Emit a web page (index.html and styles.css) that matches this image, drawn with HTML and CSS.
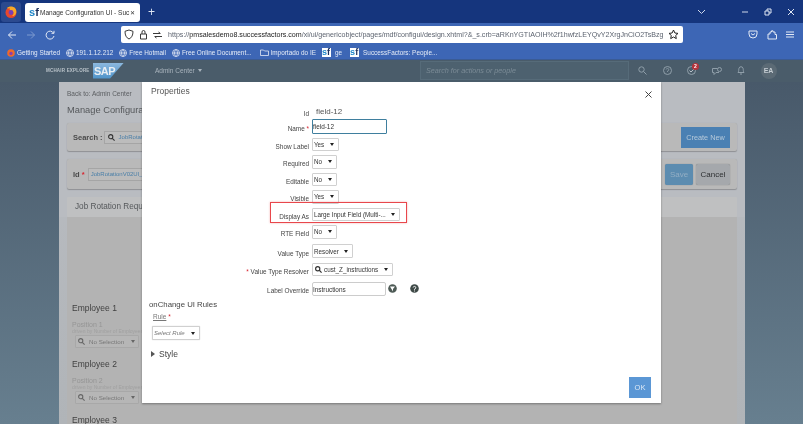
FILE: index.html
```html
<!DOCTYPE html>
<html lang="en">
<head>
<meta charset="utf-8">
<title>Manage Configuration UI</title>
<link rel="stylesheet" href="styles.css">
</head>
<body>
<div class="window">
  <header class="tabs">
    <div class="ff-btn"><svg width="14" height="14" viewBox="0 0 14 14"><circle cx="7" cy="7.500" r="5.500" fill="#e8472c"/><path d="M3 3c2-2 6-2 8 0 1.500 1.500 2 5 0 7-1 1-2 1-3 1 2-1 2-4 0-5-2-.5-3-1-2-3-1 .5-2 1-3 0z" fill="#f9a825"/><circle cx="7" cy="7.500" r="2.400" fill="#7a3fb5"/></svg></div>
    <div class="tab">
      <span class="sf"><i>s</i><b>f</b></span>
      <span class="tab-title">Manage Configuration UI - Suc</span>
      <span class="tab-x">✕</span>
    </div>
    <span class="tab-plus">+</span>
    <div class="win-ctl">
      <svg width="9" height="6" viewBox="0 0 9 6"><path d="M1 1l3.500 3.500L8 1" fill="none" stroke="#cfd8ea" stroke-width="1"/></svg>
      <span class="ctl-gap"></span>
      <svg width="7" height="2" viewBox="0 0 7 2"><path d="M0 1h6" stroke="#cfd8ea"/></svg>
      <svg width="8" height="8" viewBox="0 0 8 8"><path d="M1 3h4v4H1zM3 3V1h4v4H5" fill="none" stroke="#dfe6f3"/></svg>
      <svg width="8" height="8" viewBox="0 0 8 8"><path d="M1 1l6 6M7 1L1 7" stroke="#dfe6f3"/></svg>
    </div>
  </header>

  <nav class="toolbar">
    <svg class="nav-ic" width="10" height="10" viewBox="0 0 10 10"><path d="M9 5H1.500M5 1.500L1.500 5 5 8.500" fill="none" stroke="#e3e9f5"/></svg>
    <svg class="nav-ic" width="10" height="10" viewBox="0 0 10 10"><path d="M1 5h7.500M5 1.500L8.500 5 5 8.500" fill="none" stroke="#7f9bd0"/></svg>
    <svg class="nav-ic nav-last" width="10" height="10" viewBox="0 0 10 10"><path d="M8.500 3A4 4 0 1 0 9 6M9 .8V3.300H6.500" fill="none" stroke="#e3e9f5"/></svg>
    <div class="urlbar">
      <svg width="10" height="11" viewBox="0 0 10 11"><path d="M5 1l4 1.300c0 4-1.300 6.500-4 7.700C2.300 8.800 1 6.300 1 2.300z" fill="none" stroke="#3a3a3a"/></svg>
      <svg width="9" height="11" viewBox="0 0 9 11"><path d="M1.500 5h6v5h-6zM3 5V3a1.500 1.500 0 0 1 3 0v2" fill="none" stroke="#3a3a3a"/></svg>
      <svg width="9" height="8" viewBox="0 0 9 8"><path d="M0 2.500h7M5.500 1L7.500 2.500M9 5.500H2M3.500 7L1.500 5.500" fill="none" stroke="#3a3a3a"/></svg>
      <span class="url"><span class="url-dim">https://</span><span class="url-host">pmsalesdemo8.successfactors.com</span><span class="url-dim">/xi/ui/genericobject/pages/mdf/configui/design.xhtml?&amp;_s.crb=aRKnYGTIAOIH%2f1hwfzLEYQvY2XrgJnCiO2TsBzgc</span></span>
      <svg class="star" width="11" height="11" viewBox="0 0 11 11"><path d="M5.500 1l1.400 3 3.100.4-2.300 2.100.6 3.100-2.800-1.600-2.800 1.600.6-3.100L1 4.400 4.100 4z" fill="none" stroke="#222"/></svg>
    </div>
    <div class="tool-right">
      <svg width="10" height="9" viewBox="0 0 10 9"><path d="M1 1h8v3a4 4 0 0 1-8 0zM3 3.500l2 1.500 2-1.500" fill="none" stroke="#e3e9f5"/></svg>
      <svg width="10" height="10" viewBox="0 0 10 10"><path d="M1 4h2V2h1.500V.8h1.500V2H8v2.500H9.500V9H1z" fill="none" stroke="#e3e9f5"/></svg>
      <svg width="8" height="7" viewBox="0 0 8 7"><path d="M0 1h8M0 3.500h8M0 6h8" stroke="#e3e9f5"/></svg>
    </div>
  </nav>

  <div class="bookmarks">
    <span class="bm"><svg width="8" height="8" viewBox="0 0 8 8"><circle cx="4" cy="4" r="3.800" fill="#ef6a2a"/><circle cx="4" cy="4.500" r="1.700" fill="#8a3fb0"/></svg>Getting Started</span>
    <span class="bm"><svg class="globe" width="8" height="8" viewBox="0 0 8 8"><path d="M4 .5a3.500 3.500 0 1 0 0 7 3.500 3.500 0 0 0 0-7zM.5 4h7M4 .5c-2 2-2 5 0 7 2-2 2-5 0-7z" fill="none" stroke="#e3e9f5" stroke-width=".8"/></svg>191.1.12.212</span>
    <span class="bm"><svg class="globe" width="8" height="8" viewBox="0 0 8 8"><path d="M4 .5a3.500 3.500 0 1 0 0 7 3.500 3.500 0 0 0 0-7zM.5 4h7M4 .5c-2 2-2 5 0 7 2-2 2-5 0-7z" fill="none" stroke="#e3e9f5" stroke-width=".8"/></svg>Free Hotmail</span>
    <span class="bm bm-wide"><svg class="globe" width="8" height="8" viewBox="0 0 8 8"><path d="M4 .5a3.500 3.500 0 1 0 0 7 3.500 3.500 0 0 0 0-7zM.5 4h7M4 .5c-2 2-2 5 0 7 2-2 2-5 0-7z" fill="none" stroke="#e3e9f5" stroke-width=".8"/></svg>Free Online Document...</span>
    <span class="bm"><svg width="9" height="7" viewBox="0 0 9 7"><path d="M.5 1h3l1 1h4v4.500h-8z" fill="none" stroke="#e3e9f5" stroke-width=".8"/></svg>Importado do IE</span>
    <span class="bm bm-wide"><span class="sf sf-small"><i>s</i><b>f</b></span>ge</span>
    <span class="bm"><span class="sf sf-small"><i>s</i><b>f</b></span>SuccessFactors: People...</span>
  </div>

  <div class="apphead">
    <span class="brand">MCHAIR EXPLORE</span>
    <span class="sap">SAP</span>
    <span class="admin">Admin Center <i class="caret caret-light"></i></span>
    <div class="search">Search for actions or people</div>
    <div class="head-icons">
      <svg width="9" height="9" viewBox="0 0 9 9"><circle cx="3.500" cy="3.500" r="2.700" fill="none" stroke="#8f9ea9"/><path d="M5.500 5.500L8.500 8.500" stroke="#8f9ea9"/></svg>
      <svg width="9" height="9" viewBox="0 0 9 9"><circle cx="4.500" cy="4.500" r="4" fill="none" stroke="#8f9ea9"/><path d="M3.200 3.500a1.300 1.300 0 1 1 1.300 1.500v1" fill="none" stroke="#8f9ea9" stroke-width=".8"/></svg>
      <span class="todo"><svg width="9" height="9" viewBox="0 0 9 9"><circle cx="4.500" cy="4.500" r="4" fill="none" stroke="#8f9ea9"/><path d="M2.500 4.500l1.500 1.500 3-3" fill="none" stroke="#b7c1c9"/></svg><b class="badge">2</b></span>
      <svg width="10" height="8" viewBox="0 0 10 8"><path d="M.5 1.500h5M.5 1.500v4h1.500v2l2-2h3" fill="none" stroke="#8f9ea9"/><circle cx="7.500" cy="2.500" r="2" fill="none" stroke="#8f9ea9"/></svg>
      <svg width="8" height="9" viewBox="0 0 8 9"><path d="M1 6.500c1-1 .5-3 1-4.300a2.100 2.100 0 0 1 4 0c.5 1.300 0 3.300 1 4.300zM3 8h2" fill="none" stroke="#8f9ea9"/></svg>
      <span class="avatar">EA</span>
    </div>
  </div>

  <main class="main">
    <section class="panel">
      <div class="panel-top">
        <div class="back">Back to: Admin Center</div>
        <h1 class="page-title">Manage Configuration UI</h1>
        <div class="card card-search">
          <b class="card-label">Search :</b>
          <span class="lookup"><svg width="7" height="7" viewBox="0 0 9 9"><circle cx="3.500" cy="3.500" r="2.700" fill="none" stroke="#333" stroke-width="1.400"/><path d="M5.500 5.500L8.500 8.500" stroke="#333" stroke-width="1.400"/></svg>JobRotationV02UI</span>
          <button class="btn btn-create">Create New</button>
        </div>
        <div class="card card-id">
          <b class="card-label">Id <em>*</em></b>
          <span class="lookup lookup-id">JobRotationV02UI_</span>
          <span class="card-actions">
            <button class="btn btn-save">Save</button>
            <button class="btn btn-cancel">Cancel</button>
          </span>
        </div>
        <div class="section-bar">Job Rotation Request</div>
      </div>
      <div class="panel-body">
        <div class="employee">
          <h2>Employee 1</h2>
          <div class="pos">Position 1</div>
          <div class="hint">driven by Number of Employees</div>
          <div class="nosel"><svg width="7" height="7" viewBox="0 0 9 9"><circle cx="3.500" cy="3.500" r="2.700" fill="none" stroke="#666" stroke-width="1.400"/><path d="M5.500 5.500L8.500 8.500" stroke="#666" stroke-width="1.400"/></svg><span>No Selection</span><i class="caret caret-grey"></i></div>
        </div>
        <div class="employee">
          <h2>Employee 2</h2>
          <div class="pos">Position 2</div>
          <div class="hint">driven by Number of Employees</div>
          <div class="nosel"><svg width="7" height="7" viewBox="0 0 9 9"><circle cx="3.500" cy="3.500" r="2.700" fill="none" stroke="#666" stroke-width="1.400"/><path d="M5.500 5.500L8.500 8.500" stroke="#666" stroke-width="1.400"/></svg><span>No Selection</span><i class="caret caret-grey"></i></div>
        </div>
        <div class="employee"><h2>Employee 3</h2></div>
      </div>
    </section>

    <div class="modal">
      <h3 class="modal-title">Properties</h3>
      <button class="modal-x" aria-label="Close"><svg width="7" height="7" viewBox="0 0 7 7"><path d="M.5.5l6 6M6.500.5l-6 6" stroke="#444" stroke-width="1"/></svg></button>
      <div class="form">
        <label>Id</label><div class="val-id">field-12</div>
        <label>Name <em>*</em></label><div><span class="input input-name">field-12</span></div>
        <label>Show Label</label><div><span class="sel w27">Yes<i class="caret"></i></span></div>
        <label>Required</label><div><span class="sel w25">No<i class="caret"></i></span></div>
        <label>Editable</label><div><span class="sel w25">No<i class="caret"></i></span></div>
        <label>Visible</label><div><span class="sel w27">Yes<i class="caret"></i></span></div>
        <label>Display As</label><div><span class="sel w88">Large Input Field (Multi-...<i class="caret"></i></span></div>
        <label>RTE Field</label><div><span class="sel w25">No<i class="caret"></i></span></div>
        <label>Value Type</label><div><span class="sel w41">Resolver<i class="caret"></i></span></div>
        <label><em>*</em> Value Type Resolver</label><div><span class="sel w81"><svg width="7" height="7" viewBox="0 0 9 9"><circle cx="3.500" cy="3.500" r="2.700" fill="none" stroke="#333" stroke-width="1.500"/><path d="M5.500 5.500L8.500 8.500" stroke="#333" stroke-width="1.500"/></svg><span class="sel-text">cust_Z_instructions</span><i class="caret"></i></span></div>
        <label class="label-end">Label Override</label>
        <div class="override">
          <span class="input input-label">Instructions</span>
          <svg class="globe-ic" width="9" height="9" viewBox="0 0 9 9"><circle cx="4.500" cy="4.500" r="4.300" fill="#4d5a55"/><path d="M2 2.500h5L5 5v2.500L3.500 5z" fill="#fff"/></svg>
          <svg class="help-ic" width="9" height="9" viewBox="0 0 9 9"><circle cx="4.500" cy="4.500" r="4.300" fill="#3f4a48"/><path d="M3.200 3.500a1.300 1.300 0 1 1 1.300 1.500v.8M4.500 6.500v1" fill="none" stroke="#fff" stroke-width=".9"/></svg>
        </div>
      </div>
      <div class="rules">
        <h4>onChange UI Rules</h4>
        <div class="rule-label"><u>Rule</u> <em>*</em></div>
        <span class="sel sel-rule">Select Rule<i class="caret"></i></span>
        <div class="style-row"><i class="tri"></i>Style</div>
      </div>
      <button class="btn btn-ok">OK</button>
      <div class="highlight"></div>
    </div>
  </main>
</div>
</body>
</html>
```

FILE: styles.css
```css
* { box-sizing: border-box; }
html, body { margin: 0; height: 100%; overflow: hidden; }
body { font-family: "Liberation Sans", Arial, sans-serif; color: #333; background: #4a5f6f; }
em { color: #d9232e; font-style: normal; }
button { font-family: inherit; border: 0; padding: 0; margin: 0; }
h1, h2, h3, h4 { margin: 0; font-weight: 400; }

.window { width: 803px; height: 424px; display: flex; flex-direction: column; filter: blur(.35px); overflow: hidden; }

/* browser tabs */
.tabs { flex: 0 0 23px; background: #15357d; display: flex; align-items: center; }
.ff-btn { width: 20px; height: 20px; margin: 1px 0 0 1px; background: #2c4a8f; border-radius: 3px; display: flex; align-items: center; justify-content: center; }
.tab { width: 115px; height: 19px; margin: 2px 0 0 4px; background: #fff; border-radius: 3px; display: flex; align-items: center; padding-left: 4px; }
.tab-title { font-size: 6.500px; color: #333; white-space: nowrap; }
.tab-x { font-size: 6px; margin-left: auto; margin-right: 5px; color: #333; }
.tab-plus { color: #dfe6f3; font-size: 12px; margin-left: 8px; line-height: 1; }
.win-ctl { margin-left: auto; margin-right: 8px; display: flex; align-items: center; gap: 15px; }
.ctl-gap { width: 21px; margin-left: -15px; }

.sf { display: inline-flex; flex: none; align-items: flex-end; font-weight: 700; font-size: 11px; line-height: 1; width: 11px; overflow: hidden; }
.sf i { font-style: normal; color: #1f86c9; }
.sf b { color: #1c2f5c; }
.sf-small { font-size: 9px; width: 9px; background: #fff; margin-right: 2px; }

/* address bar */
.toolbar { flex: 0 0 23px; background: #3d66b5; display: flex; align-items: center; padding-left: 7px; }
.nav-ic { margin-right: 9px; flex: none; }
.nav-last { margin-right: 66px; }
.urlbar { width: 562px; min-width: 0; flex: none; height: 17px; background: #fff; border-radius: 2px; display: flex; align-items: center; padding: 0 4px 0 3px; gap: 5px; font-size: 7.100px; }
.urlbar svg { flex: none; }
.url { flex: 1; min-width: 0; overflow: hidden; white-space: nowrap; margin-left: 1px; }
.url-host { color: #222; }
.url-dim { color: #5d6470; }
.tool-right { margin-left: auto; margin-right: 9px; display: flex; align-items: center; gap: 9px; }

/* bookmarks */
.bookmarks { flex: 0 0 13px; background: #3d66b5; display: flex; align-items: center; padding-left: 7px; gap: 6px; color: #e4ebf7; font-size: 6.400px; white-space: nowrap; }
.bm { display: inline-flex; align-items: center; gap: 2px; }
.bm-wide { margin-right: 2px; }

/* app header */
.apphead { flex: 0 0 23px; background: #4a5c6a; display: flex; align-items: center; box-shadow: inset 0 1px 0 #3a5b95; }
.brand { font-size: 4.500px; font-weight: 700; color: #b9c2c9; margin-left: 46px; width: 47px; letter-spacing: .2px; white-space: nowrap; }
.sap { width: 31px; height: 16px; background: linear-gradient(#8cb8de, #4e93c9); clip-path: polygon(0 0, 100% 0, 55% 100%, 0 100%); color: #e8eef3; font-weight: 700; font-size: 11px; line-height: 16px; padding-left: 1px; letter-spacing: -.5px; }
.admin { color: #a9b4bd; font-size: 6.500px; margin-left: 31px; width: 265px; display: flex; align-items: center; gap: 3px; white-space: nowrap; }
.search { width: 209px; height: 19px; border: 1px solid #566b79; background: #4d616f; color: #7b8b96; font-size: 7.200px; font-style: italic; display: flex; align-items: center; padding-left: 5px; }
.head-icons { display: flex; align-items: center; margin-left: 9px; gap: 15.500px; }
.todo { position: relative; display: inline-flex; }
.badge { position: absolute; top: -3px; left: 5px; width: 7px; height: 7px; border-radius: 50%; background: #b5323a; color: #fff; font-size: 5px; line-height: 7px; text-align: center; }
.avatar { width: 16px; height: 16px; border-radius: 50%; background: #5b6a75; color: #c4ccd2; font-size: 7px; font-weight: 700; display: flex; align-items: center; justify-content: center; }

/* page */
.main { flex: 1; position: relative; background: linear-gradient(#48596a, #677f8f); padding-left: 59px; overflow: hidden; }
.panel { width: 686px; height: 100%; background: linear-gradient(#babdc2, #b0b4b8); display: flex; flex-direction: column; }
.panel-top { background: #b9bcc1; padding: 8px 8px 0; }
.back { font-size: 6.500px; color: #5a5d60; line-height: 8px; }
.page-title { font-size: 9.300px; color: #55585b; line-height: 11px; margin-top: 7px; }
.card { background: #b9b9b9; box-shadow: 0 1px 1px #8f9194, 0 0 1px #a4a6a8; border-radius: 2px; display: flex; align-items: center; padding-left: 6px; }
.card-search { height: 28px; margin-top: 7px; }
.card-id { height: 30px; margin-top: 8px; }
.card-label { font-size: 7.500px; color: #4a4a4a; white-space: nowrap; }
.lookup { margin-left: 1px; height: 13px; width: 100px; background: #bcbcbc; border: 1px solid #a5a5a5; display: inline-flex; align-items: center; gap: 4px; font-size: 6px; color: #4a7fa8; padding-left: 3px; white-space: nowrap; }
.lookup-id { margin-left: 3px; padding-left: 2px; }
.btn { font-size: 8px; cursor: default; }
.btn-create { margin-left: auto; margin-right: 7px; width: 49px; height: 21px; background: #4a80b3; color: #b7c9da; font-size: 7.300px; }
.card-actions { margin-left: auto; margin-right: 7px; display: flex; gap: 3px; }
.btn-save { width: 28px; height: 21px; background: #5c8cb0; color: #93aec4; border-radius: 2px; box-shadow: 0 0 1px #6e7d87; }
.btn-cancel { width: 34px; height: 21px; background: #a5a8ac; color: #2f3133; border-radius: 2px; box-shadow: 0 0 1px #6e7173; }
.section-bar { height: 20px; margin-top: 8px; background: #bfc0c1; font-size: 8.200px; color: #55585b; line-height: 20px; padding-left: 8px; border-radius: 1px; white-space: nowrap; }
.panel-body { flex: 1; margin: 0 8px; padding: 86px 0 0 5px; background: #b3b3b3; min-height: 0; }
.employee { height: 56px; }
.employee h2 { font-size: 8.500px; color: #414141; line-height: 10px; }
.pos { font-size: 7px; color: #959595; line-height: 8px; margin-top: 8px; }
.hint { font-size: 5px; color: #a0a0a0; line-height: 5px; white-space: nowrap; }
.nosel { width: 64px; height: 13px; margin-top: 1px; margin-left: 3px; background: #b6b6b6; border: 1px solid #a8a8a8; border-radius: 1px; display: flex; align-items: center; padding-left: 2px; gap: 4px; font-size: 6.200px; color: #777; }
.nosel .caret { margin-left: auto; margin-right: 3px; }

.caret { display: inline-block; flex: none; width: 0; height: 0; border: 2.500px solid transparent; border-top: 3px solid #222; border-bottom: 0; }
.caret-light { border-top-color: #a9b4bd; }
.caret-grey { border-top-color: #666; }

/* dialog */
.modal { position: absolute; left: 142px; top: 0; width: 519px; height: 321px; background: #fff; box-shadow: 0 1px 2px rgba(0,0,0,.35); }
.modal-title { position: absolute; left: 9px; top: 4px; font-size: 8.500px; line-height: 11px; color: #555; }
.modal-x { position: absolute; right: 9px; top: 9px; width: 7px; height: 7px; background: none; display: flex; }
.form { display: grid; grid-template-columns: 167px auto; grid-template-rows: 14px repeat(7, 17.500px) 21px 15.500px 19px; justify-content: start; column-gap: 3px; padding-top: 22px; font-size: 6.400px; color: #444; }
.form label { text-align: right; align-self: center; padding-top: 4px; white-space: nowrap; }
.form .label-end { align-self: end; padding-top: 0; padding-bottom: 2px; }
.form > div { display: flex; align-items: center; }
.form .val-id { font-size: 8px; padding-left: 4px; color: #555; }
.input { height: 14px; display: flex; align-items: center; font-size: 6.400px; border: 1px solid #ccc; background: #fff; color: #333; }
.input-name { width: 75px; height: 15px; border: 1.500px solid #3f7f9e; border-radius: 1px; }
.input-label { width: 74px; height: 14px; border-radius: 2px; }
.sel { height: 13.500px; display: inline-flex; align-items: center; font-size: 6.300px; color: #333; background: #fff; border: 1px solid #d0d0d0; border-radius: 1px; padding: 0 4px 0 1px; white-space: nowrap; justify-content: space-between; }
.sel svg { margin: 0 2px 0 1px; flex: none; }
.sel-text { margin-right: auto; }
.w25 { width: 25px; } .w27 { width: 27px; } .w41 { width: 41px; } .w81 { width: 81px; } .w88 { width: 88px; }
.form .override { align-items: flex-end; }
.override svg { margin-bottom: 3px; }
.globe-ic { margin-left: 2px; }
.help-ic { margin-left: 13px; }

.rules { padding: 3px 0 0 7px; }
.rules h4 { font-size: 7.800px; color: #444; line-height: 11px; }
.rule-label { font-size: 6.500px; color: #777; margin: 3px 0 0 4px; line-height: 8px; }
.sel-rule { display: flex; width: 48px; height: 14px; margin: 5px 0 0 3px; font-size: 6px; font-style: italic; color: #777; box-shadow: 0 0 1px #bbb; }
.style-row { font-size: 8.500px; color: #444; margin: 9px 0 0 2px; display: flex; align-items: center; gap: 4px; line-height: 10px; }
.tri { width: 0; height: 0; border: 3px solid transparent; border-left: 4px solid #555; border-right: 0; }
.btn-ok { position: absolute; right: 10px; bottom: 5px; width: 22px; height: 21px; background: #5b97d5; color: #dbe8f5; font-size: 7.500px; }
.highlight { position: absolute; left: 128px; top: 120px; width: 137px; height: 21px; border: 1.500px solid #e8474c; box-shadow: 0 0 2px rgba(232,71,76,.4); }
```
